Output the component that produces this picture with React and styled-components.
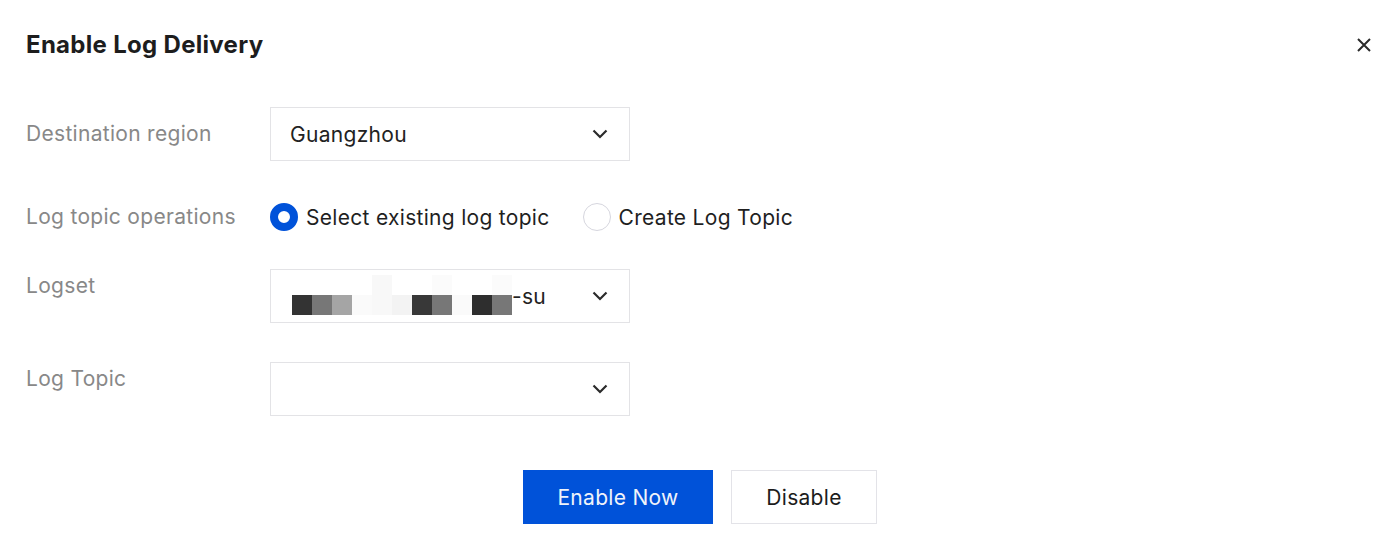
import React, { useState } from "react"
import styled, { createGlobalStyle } from "styled-components"

const GlobalStyle = createGlobalStyle`
  body {
    margin: 0;
    background: #fff;
    font-family: Inter, "Noto Sans", "Liberation Sans", sans-serif;
    color: #222;
  }
`

const Dialog = styled.div`
  width: 1400px;
  height: 548px;
  box-sizing: border-box;
  background: #fff;
`

const Header = styled.div`
  display: flex;
  justify-content: space-between;
  align-items: center;
  padding: 28px 29px 0 26px;
  height: 34px;
`

const Title = styled.h2`
  margin: 0;
  font-size: 24px;
  line-height: 34px;
  font-weight: 700;
  letter-spacing: 0.3px;
  color: #1d1d1d;
`

const CloseButton = styled.button`
  border: 0;
  background: none;
  padding: 0;
  width: 14px;
  height: 14px;
  display: flex;
  cursor: pointer;
  color: #2b2b2b;
`

const Form = styled.div`
  display: flex;
  flex-direction: column;
  padding: 45px 26px 0;
`

const Row = styled.div`
  display: flex;
  align-items: ${(p) => (p.$center ? "center" : "flex-start")};
  margin-top: ${(p) => p.$gap || 0}px;
`

const Label = styled.div`
  width: 244px;
  flex-shrink: 0;
  font-size: 21px;
  line-height: 28px;
  letter-spacing: 0.3px;
  color: #888;
  padding-top: ${(p) => p.$offset || 0}px;
`

const SelectBox = styled.div`
  width: 360px;
  height: 54px;
  box-sizing: border-box;
  border: 1px solid #e3e3e6;
  display: flex;
  align-items: center;
  justify-content: space-between;
  padding: 0 21px 0 19px;
  font-size: 21px;
  letter-spacing: 0.3px;
  color: #222;
  cursor: pointer;
`

const Value = styled.span`
  display: flex;
  align-items: center;
`

const Mosaic = styled.span`
  display: grid;
  grid-template-columns: repeat(11, 20px);
  grid-template-rows: 20px 20px;
  margin: -2px 0 0 2px;
`

const Pixel = styled.span`
  background: ${(p) => p.$c};
`

const RadioGroup = styled.div`
  display: flex;
  align-items: center;
  gap: 33px;
  height: 28px;
`

const RadioOption = styled.label`
  display: flex;
  align-items: center;
  gap: 8px;
  font-size: 21px;
  letter-spacing: 0.3px;
  color: #1f1f1f;
  cursor: pointer;
`

const RadioDot = styled.span`
  width: 28px;
  height: 28px;
  box-sizing: border-box;
  border-radius: 50%;
  border: ${(p) => (p.$checked ? "8px solid #0052d9" : "1px solid #d6d6de")};
  background: #fff;
`

const Footer = styled.div`
  display: flex;
  justify-content: center;
  gap: 18px;
  margin-top: 54px;
`

const Button = styled.button`
  height: 54px;
  width: ${(p) => p.$width}px;
  box-sizing: border-box;
  font-family: inherit;
  font-size: 21px;
  letter-spacing: 0.3px;
  cursor: pointer;
  border: 1px solid ${(p) => (p.$primary ? "#0052d9" : "#e3e3e8")};
  background: ${(p) => (p.$primary ? "#0052d9" : "#fff")};
  color: ${(p) => (p.$primary ? "#f0f3fa" : "#1c1c1c")};
`

const Chevron = () => (
  <svg width="16" height="10" viewBox="0 0 16 10" fill="none">
    <path d="M1.5 1.5L8 8L14.5 1.5" stroke="#2b2b2b" strokeWidth="2.2" />
  </svg>
)

const CloseIcon = () => (
  <svg width="14" height="14" viewBox="0 0 14 14" fill="none">
    <path d="M1 1L13 13M13 1L1 13" stroke="currentColor" strokeWidth="2" />
  </svg>
)

// obscured logset name, two rows of grey cells
const maskTop = [
  "#fff", "#fff", "#fff", "#fff", "#f8f8f8", "#fff",
  "#fff", "#fbfbfb", "#fff", "#fff", "#fbfbfb",
]
const maskBottom = [
  "#333", "#777", "#a5a5a5", "#fafafa", "#f8f8f8", "#f3f3f3",
  "#383838", "#777", "#fafafa", "#2e2e2e", "#777",
]

const Select = ({ children }) => (
  <SelectBox>
    <Value>{children}</Value>
    <Chevron />
  </SelectBox>
)

export default function App() {
  const [mode, setMode] = useState("existing")

  return (
    <>
      <GlobalStyle />
      <Dialog>
        <Header>
          <Title>Enable Log Delivery</Title>
          <CloseButton aria-label="Close">
            <CloseIcon />
          </CloseButton>
        </Header>

        <Form>
          <Row $center>
            <Label>Destination region</Label>
            <Select>Guangzhou</Select>
          </Row>

          <Row $center $gap={42}>
            <Label>Log topic operations</Label>
            <RadioGroup>
              <RadioOption onClick={() => setMode("existing")}>
                <RadioDot $checked={mode === "existing"} />
                Select existing log topic
              </RadioOption>
              <RadioOption onClick={() => setMode("create")}>
                <RadioDot $checked={mode === "create"} />
                Create Log Topic
              </RadioOption>
            </RadioGroup>
          </Row>

          <Row $gap={38}>
            <Label $offset={3}>Logset</Label>
            <Select>
              <Mosaic>
                {maskTop.concat(maskBottom).map((c, i) => (
                  <Pixel key={i} $c={c} />
                ))}
              </Mosaic>
              -su
            </Select>
          </Row>

          <Row $gap={39}>
            <Label $offset={3}>Log Topic</Label>
            <Select />
          </Row>
        </Form>

        <Footer>
          <Button $primary $width={190}>Enable Now</Button>
          <Button $width={146}>Disable</Button>
        </Footer>
      </Dialog>
    </>
  )
}
